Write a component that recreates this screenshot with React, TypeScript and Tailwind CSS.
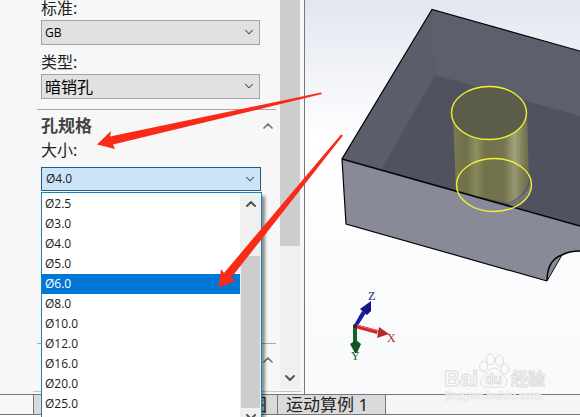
import { ChevronDown, ChevronUp } from 'lucide-react'

const sizes = ['2.5', '3.0', '4.0', '5.0', '6.0', '8.0', '10.0', '12.0', '16.0', '20.0', '25.0']

const labelClass = 'mb-1 block text-base leading-4 text-[#222]'

type FieldProps = {
  id: string
  label: string
  value: string
  className: string
}

function SelectField({ id, label, value, className }: FieldProps) {
  return (
    <div>
      <label htmlFor={id} className={labelClass}>
        {label}
      </label>
      <div className="relative">
        <select
          id={id}
          defaultValue={value}
          className={`block h-[25px] w-full appearance-none border border-[#a3a3a3] bg-[#e1e1e1] px-[3px] text-black outline-none ${className}`}
        >
          <option>{value}</option>
        </select>
        <ChevronDown
          size={14}
          strokeWidth={1.8}
          className="pointer-events-none absolute right-1 top-[5px] text-[#444]"
        />
      </div>
    </div>
  )
}

function SizeList() {
  return (
    <div className="absolute left-0 top-[25px] z-10 flex h-60 w-[221px] border border-[#1883b7] bg-white shadow-[3px_4px_3px_rgba(0,0,0,0.45)]">
      <ul role="listbox" aria-label="大小" className="flex-1 overflow-hidden pt-px font-['Open_Sans','Noto_Sans',sans-serif] text-xs">
        {sizes.map((size) => (
          <li
            key={size}
            role="option"
            aria-selected={size === '6.0'}
            className={size === '6.0' ? 'h-5 bg-[#0078d7] px-[3px] leading-5 text-white' : 'h-5 px-[3px] leading-5 text-[#1a1a1a]'}
          >
            Ø{size}
          </li>
        ))}
      </ul>
      <div className="flex w-[21px] flex-col items-center bg-[#f0f0f0]">
        <ChevronUp size={16} strokeWidth={3} className="my-[3px] text-[#555]" />
        <div className="mt-[41px] h-[152px] w-[19px] bg-[#cdcdcd]" />
        <ChevronDown size={16} strokeWidth={3} className="mt-px text-[#555]" />
      </div>
    </div>
  )
}

function PropertyPanel() {
  return (
    <aside className="flex w-[305px] shrink-0 border-r border-[#777] bg-[#f7f7f7]">
      <div className="w-[280px] pl-[37px] pr-1">
        <div className="flex flex-col gap-[9px] pl-1 pr-4">
          <SelectField id="standard" label="标准:" value="GB" className="font-['Open_Sans','Noto_Sans',sans-serif] text-xs" />
          <SelectField id="kind" label="类型:" value="暗销孔" className="text-base" />
        </div>
        <div className="mt-[10px] border-t border-[#a8a8a8] pl-1 pt-1">
          <div className="mb-1 flex items-center justify-between">
            <h2 className="text-[17px] font-bold leading-6 text-[#444]">孔规格</h2>
            <ChevronUp size={16} strokeWidth={2.6} className="text-[#777]" />
          </div>
          <label htmlFor="size" className={labelClass}>
            大小:
          </label>
          <div className="relative mr-[15px] mt-[9px]">
            <select
              id="size"
              defaultValue="Ø4.0"
              className="block h-6 w-full appearance-none border border-[#1f5c86] bg-[#cce4f7] px-1 font-['Open_Sans','Noto_Sans',sans-serif] text-xs text-[#1a1a1a] outline-none"
            >
              <option>Ø4.0</option>
            </select>
            <ChevronDown size={14} strokeWidth={1.8} className="pointer-events-none absolute right-1 top-[5px] text-[#444]" />
            <SizeList />
          </div>
        </div>
        <div className="mt-[152px] flex justify-end border-t border-[#a8a8a8] pt-2">
          <ChevronUp size={16} strokeWidth={2.6} className="text-[#777]" />
        </div>
        <div className="-ml-1 -mr-[25px] mt-[23px] border-t border-[#c4c4c4]" />
      </div>
      <div className="mb-[5px] flex w-5 flex-col items-center justify-between bg-[#f0f0f0]">
        <div className="h-[246px] w-full bg-[#cdcdcd]" />
        <ChevronDown size={16} strokeWidth={3} className="mb-[3px] text-[#555]" />
      </div>
    </aside>
  )
}

function Block() {
  return (
    <>
      <defs>
        <linearGradient id="wall" x1="453" x2="530" y1="0" y2="0" gradientUnits="userSpaceOnUse">
          <stop offset="0" stopColor="#7b7b52" />
          <stop offset="0.17" stopColor="#6f704b" />
          <stop offset="0.3" stopColor="#8f8f63" />
          <stop offset="0.42" stopColor="#72734c" />
          <stop offset="0.66" stopColor="#74754e" />
          <stop offset="0.8" stopColor="#a1a17b" />
          <stop offset="0.92" stopColor="#7b7c55" />
          <stop offset="1" stopColor="#66674e" />
        </linearGradient>
        <clipPath id="top-face">
          <path d="M432 9.5 L580 51 V226 L342 159Z" />
        </clipPath>
      </defs>
      <path d="M342 159 L580 226 V251 Q569 251 562 255 L547 281 L346 224Z" fill="#888a98" />
      <path d="M432 9.5 L580 51 V226 L342 159Z" fill="#5d5f6c" />
      <path d="M342 159 L432 9.5 L435 75 L381 170Z" fill="#5b5e6a" />
      <path d="M435 75 L580 116 V226 L381 170Z" fill="#50525f" />
      <g clipPath="url(#top-face)">
        <path d="M508 203 Q526 197 530 183 L531 190 Q526 204 514 208Z" fill="#73777f" />
        <path d="M453 113 L456 192 L508 203 Q525 196 529 181 L527 113Z" fill="url(#wall)" />
        <ellipse cx="494" cy="185" rx="37" ry="26.5" fill="#6d6e45" opacity="0.2" />
      </g>
      <ellipse cx="489" cy="113" rx="37.5" ry="26.5" fill="#5b5c49" />
      <path d="M580 51 L432 9.5 L342 159 L346 224 L547 281" fill="none" stroke="#050508" strokeWidth="1.2" />
      <path d="M342 159 L580 226" stroke="#050508" strokeWidth="1.6" />
      <path d="M547 281 Q547 260 562 255 Q569 251 580 251" fill="none" stroke="#050508" strokeWidth="1.5" />
      <path d="M547 281 L562 255" stroke="#111" strokeWidth="1" />
      <g fill="none" stroke="#f2f233" strokeWidth="1.4">
        <ellipse cx="489" cy="113" rx="37.5" ry="26.5" />
        <ellipse cx="494" cy="185" rx="37.5" ry="26.5" />
      </g>
    </>
  )
}

function Triad() {
  return (
    <g fontFamily="'Liberation Serif', serif" fontSize="12">
      <path d="M353 326 H357 V344 H353Z" fill="#17602b" />
      <path d="M350 344 L356 340 L361 344 L357 353 H355Z" fill="#155221" />
      <path d="M354 325 L362 311 L366 313 L357 327Z" fill="#1c1ca3" />
      <path d="M360 309 L371 301 L371 311 L367 315Z" fill="#15158a" />
      <path d="M355 324 L378 330 L377 334 L355 328Z" fill="#d4222b" />
      <path d="M379 327 L389 334 L377 338Z" fill="#b3272d" />
      <path d="M356 325 L378 331" stroke="#ef6a69" strokeWidth="1" />
      <circle cx="355" cy="326" r="2" fill="#281b35" />
      <text x="368" y="300" fill="#1a1a8c">Z</text>
      <text x="387" y="342" fill="#b51f2b">X</text>
      <text x="351" y="360" fill="#17602b">Y</text>
    </g>
  )
}

function Watermark() {
  return (
    <svg
      width="110"
      height="55"
      viewBox="440 350 110 55"
      className="absolute bottom-3 right-[30px]"
      fill="#fafafb"
      stroke="#dddde0"
      strokeWidth="1"
      fontFamily="'Liberation Sans', 'Noto Sans CJK SC', sans-serif"
      fontWeight="bold"
    >
      <text x="444" y="386" fontSize="22">Bai</text>
      <ellipse cx="483.5" cy="366.5" rx="4" ry="5" />
      <ellipse cx="490.5" cy="359.5" rx="4" ry="5.5" />
      <ellipse cx="499.5" cy="360.5" rx="4" ry="5.5" />
      <ellipse cx="505" cy="369" rx="4" ry="5" />
      <path d="M494 368 C499 368 501 374 505 377 C510 382 506 388 500 387 H487 C480 388 479 381 483 377 C487 374 488 368 494 368Z" />
      <text x="485" y="384" fontSize="14">du</text>
      <text x="511" y="385" fontSize="17">经验</text>
      <text x="445" y="399" fontSize="11" strokeWidth="0.5" stroke="#e0e0e2">jingyan.baidu.com</text>
    </svg>
  )
}

function Viewport() {
  return (
    <main className="flex-1 overflow-hidden bg-linear-to-b from-[#e2e6ef] via-white via-35% to-[#f8f9fb]">
      <svg width="275" height="394" viewBox="305 0 275 394" aria-label="模型">
        <Block />
        <Triad />
      </svg>
    </main>
  )
}

function TabBar() {
  return (
    <footer className="mb-[2px] flex h-[21px] shrink-0 border-y border-[#777] bg-[#f5f5f5] text-[17px] leading-5 text-[#222]">
      <div className="w-[33px] bg-[#f7f7f7]" />
      <button className="w-[245px] border-x border-[#777] bg-[#dadada] pr-[10px] text-right">图</button>
      <button className="w-[108px] border-r border-[#777] bg-[#dadada] pl-2 text-left">运动算例 1</button>
    </footer>
  )
}

function Arrows() {
  return (
    <svg width="580" height="417" viewBox="0 0 580 417" className="pointer-events-none absolute left-0 top-0 z-20" fill="#f92a18">
      <path d="M97 144.5 L111 131 L110 136.5 L321 92.5 L322 94 L113 144.5 L115 149Z" />
      <path d="M218.5 287.5 L221 269 L224 273 L341 134.5 L343 135.5 L231 278 L236 281Z" />
    </svg>
  )
}

export default function App() {
  return (
    <div className="relative flex h-screen flex-col overflow-hidden bg-white font-['Noto_Sans','Noto_Sans_CJK_SC',sans-serif]">
      <div className="flex min-h-0 flex-1">
        <PropertyPanel />
        <Viewport />
      </div>
      <TabBar />
      <Arrows />
      <Watermark />
    </div>
  )
}
